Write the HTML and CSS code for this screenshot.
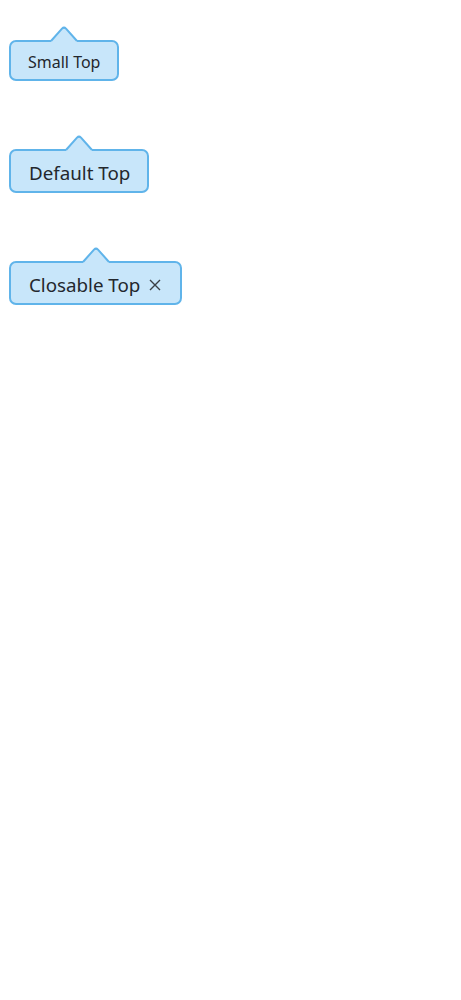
FILE: index.html
```html
<!DOCTYPE html>
<html lang="en">
<head>
<meta charset="utf-8">
<title>Tooltips</title>
<link rel="stylesheet" href="styles.css">
</head>
<body>
<div class="stack">
  <div class="tip tip-small">
    <svg class="arrow" width="26" height="18" viewBox="0 0 26 18" aria-hidden="true">
      <path class="arrow-fill" d="M0 15 L11 2.6 Q13 0.6 15 2.6 L26 15 L26 18 L0 18 Z"/>
      <path class="arrow-line" d="M0 15 L11 2.6 Q13 0.6 15 2.6 L26 15"/>
    </svg>
    <span class="label">Small Top</span>
  </div>
  <div class="tip tip-default">
    <svg class="arrow" width="26" height="18" viewBox="0 0 26 18" aria-hidden="true">
      <path class="arrow-fill" d="M0 15 L11 2.6 Q13 0.6 15 2.6 L26 15 L26 18 L0 18 Z"/>
      <path class="arrow-line" d="M0 15 L11 2.6 Q13 0.6 15 2.6 L26 15"/>
    </svg>
    <span class="label">Default Top</span>
  </div>
  <div class="tip tip-default tip-closable">
    <svg class="arrow" width="26" height="18" viewBox="0 0 26 18" aria-hidden="true">
      <path class="arrow-fill" d="M0 15 L11 2.6 Q13 0.6 15 2.6 L26 15 L26 18 L0 18 Z"/>
      <path class="arrow-line" d="M0 15 L11 2.6 Q13 0.6 15 2.6 L26 15"/>
    </svg>
    <span class="label">Closable Top</span>
    <svg class="close" width="12" height="12" viewBox="0 0 12 12" aria-label="Close">
      <path d="M1 1 L11 11 M11 1 L1 11"/>
    </svg>
  </div>
</div>
</body>
</html>
```
FILE: styles.css
```css
html, body {
  margin: 0;
  padding: 0;
  background: #ffffff;
}

body {
  font-family: "Noto Sans", "Open Sans", sans-serif;
  color: #23272d;
}

.stack {
  display: flex;
  flex-direction: column;
  align-items: flex-start;
  padding: 40px 0 0 9px;
  gap: 68px;
}

.tip {
  position: relative;
  display: inline-flex;
  align-items: center;
  box-sizing: border-box;
  background: #c8e6fa;
  border: 2px solid #60b4ea;
  border-radius: 7px;
}

.tip-small {
  height: 41px;
  padding: 2px 17px 0 17px;
  font-size: 16px;
}

.tip-default {
  height: 44px;
  padding: 4px 17px 0 18px;
  font-size: 18.75px;
}

.tip-closable {
  gap: 9px;
  padding-right: 19px;
}

.label {
  line-height: 20px;
  white-space: nowrap;
}

.arrow {
  position: absolute;
  left: 50%;
  top: -16px;
  margin-left: -13px;
  overflow: visible;
}

.arrow-fill {
  fill: #c8e6fa;
}

.arrow-line {
  fill: none;
  stroke: #60b4ea;
  stroke-width: 2;
  stroke-linejoin: round;
}

.close {
  flex: none;
}

.close path {
  fill: none;
  stroke: #3a3f45;
  stroke-width: 1.4;
}
```
